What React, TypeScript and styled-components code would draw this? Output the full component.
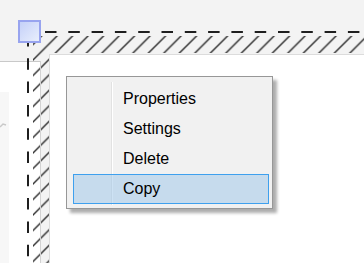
import React from "react";
import styled, { createGlobalStyle } from "styled-components";

const Global = createGlobalStyle`
  html, body { margin: 0; padding: 0; background: #f3f3f3; }
  body {
    width: 364px;
    height: 263px;
    overflow: hidden;
    font-family: "Segoe UI", "Liberation Sans", Arial, sans-serif;
  }
`;

const Stage = styled.div`
  position: relative;
  width: 364px;
  height: 263px;
  background: #f3f3f3;
  display: flex;
  align-items: stretch;
  overflow: hidden;
`;

const LeftPane = styled.div`
  width: 40px;
  margin-top: 61px;
  background: #ffffff;
  border-top: 1px solid #c9c9c9;
  border-right: 1px solid #d2d2d2;
  display: flex;
  align-items: flex-start;
`;

const LeftStrip = styled.div`
  width: 9px;
  margin-top: 30px;
  align-self: stretch;
  box-sizing: border-box;
  background: #f7f7f7;
  padding-top: 25px;
`;

const Panel = styled.div`
  flex: 1;
  margin-left: 8px;
  margin-top: 54px;
  background: #ffffff;
  border-top: 1px solid #dcdcdc;
  border-left: 1px solid #dcdcdc;
`;

const Adorner = styled.svg`
  position: absolute;
  left: 0;
  top: 0;
  pointer-events: none;
`;

const Menu = styled.div`
  position: absolute;
  left: 66px;
  top: 76px;
  width: 207px;
  box-sizing: border-box;
  padding: 7px 3px 4px 6px;
  border: 1px solid #979797;
  background:
    linear-gradient(to right, transparent 44px, #e2e2e2 44px, #e2e2e2 45px, #ffffff 45px, #ffffff 46px, transparent 46px) 0 5px / 100% calc(100% - 8px) no-repeat,
    #f1f1f1;
  box-shadow: 4px 4px 3px rgba(0, 0, 0, 0.32);
  font-family: "Segoe UI", "Liberation Sans", Arial, sans-serif;
  font-size: 16px;
  color: #000;
`;

const Item = styled.div<{ $active?: boolean }>`
  height: 30px;
  box-sizing: border-box;
  display: flex;
  align-items: center;
  padding: 0 0 0 49px;
  border: 1px solid ${(p) => (p.$active ? "#3ea0ee" : "transparent")};
  background: ${(p) => (p.$active ? "rgba(155, 198, 234, 0.5)" : "transparent")};
  white-space: nowrap;
`;

const items = ["Properties", "Settings", "Delete", "Copy"];

export default function App() {
  return (
    <>
      <Global />
      <Stage>
        <LeftPane>
          <LeftStrip>
            <svg width="9" height="10" viewBox="0 0 9 10">
              <path d="M0 6 L3 3 L6 4" stroke="#c9c9c9" strokeWidth="1.5" fill="none" />
            </svg>
          </LeftStrip>
        </LeftPane>
        <Panel />

        <Adorner width="364" height="263" viewBox="0 0 364 263">
          <defs>
            <pattern id="hatch" patternUnits="userSpaceOnUse" width="15.5" height="15.5">
              <path
                d="M-1 16.5 L16.5 -1 M-2 2 L2 -2 M13.5 17.5 L17.5 13.5"
                stroke="#2a2a2a"
                strokeWidth="1.4"
              />
            </pattern>
            <clipPath id="band">
              <path d="M33 36 H364 V53 H49 V263 H33 Z" />
            </clipPath>
            <linearGradient id="handle" x1="0" y1="0" x2="1" y2="1">
              <stop offset="0" stopColor="#c3cff8" />
              <stop offset="1" stopColor="#eaf0fd" />
            </linearGradient>
          </defs>
          <rect x="0" y="0" width="364" height="263" fill="url(#hatch)" clipPath="url(#band)" />
          <line x1="40.5" y1="61" x2="40.5" y2="263" stroke="#d2d2d2" strokeWidth="1" />
          <line
            x1="28"
            y1="32"
            x2="364"
            y2="32"
            stroke="#1f1f1f"
            strokeWidth="2"
            strokeDasharray="11.5 11.8"
            strokeDashoffset="6.3"
          />
          <line
            x1="28"
            y1="32"
            x2="28"
            y2="263"
            stroke="#1f1f1f"
            strokeWidth="2"
            strokeDasharray="11.5 11.8"
            strokeDashoffset="-3"
          />
          <rect x="19" y="21" width="21" height="21" fill="url(#handle)" stroke="#98a4ef" strokeWidth="2" />
        </Adorner>

        <Menu>
          {items.map((label) => (
            <Item key={label} $active={label === "Copy"}>
              {label}
            </Item>
          ))}
        </Menu>
      </Stage>
    </>
  );
}
